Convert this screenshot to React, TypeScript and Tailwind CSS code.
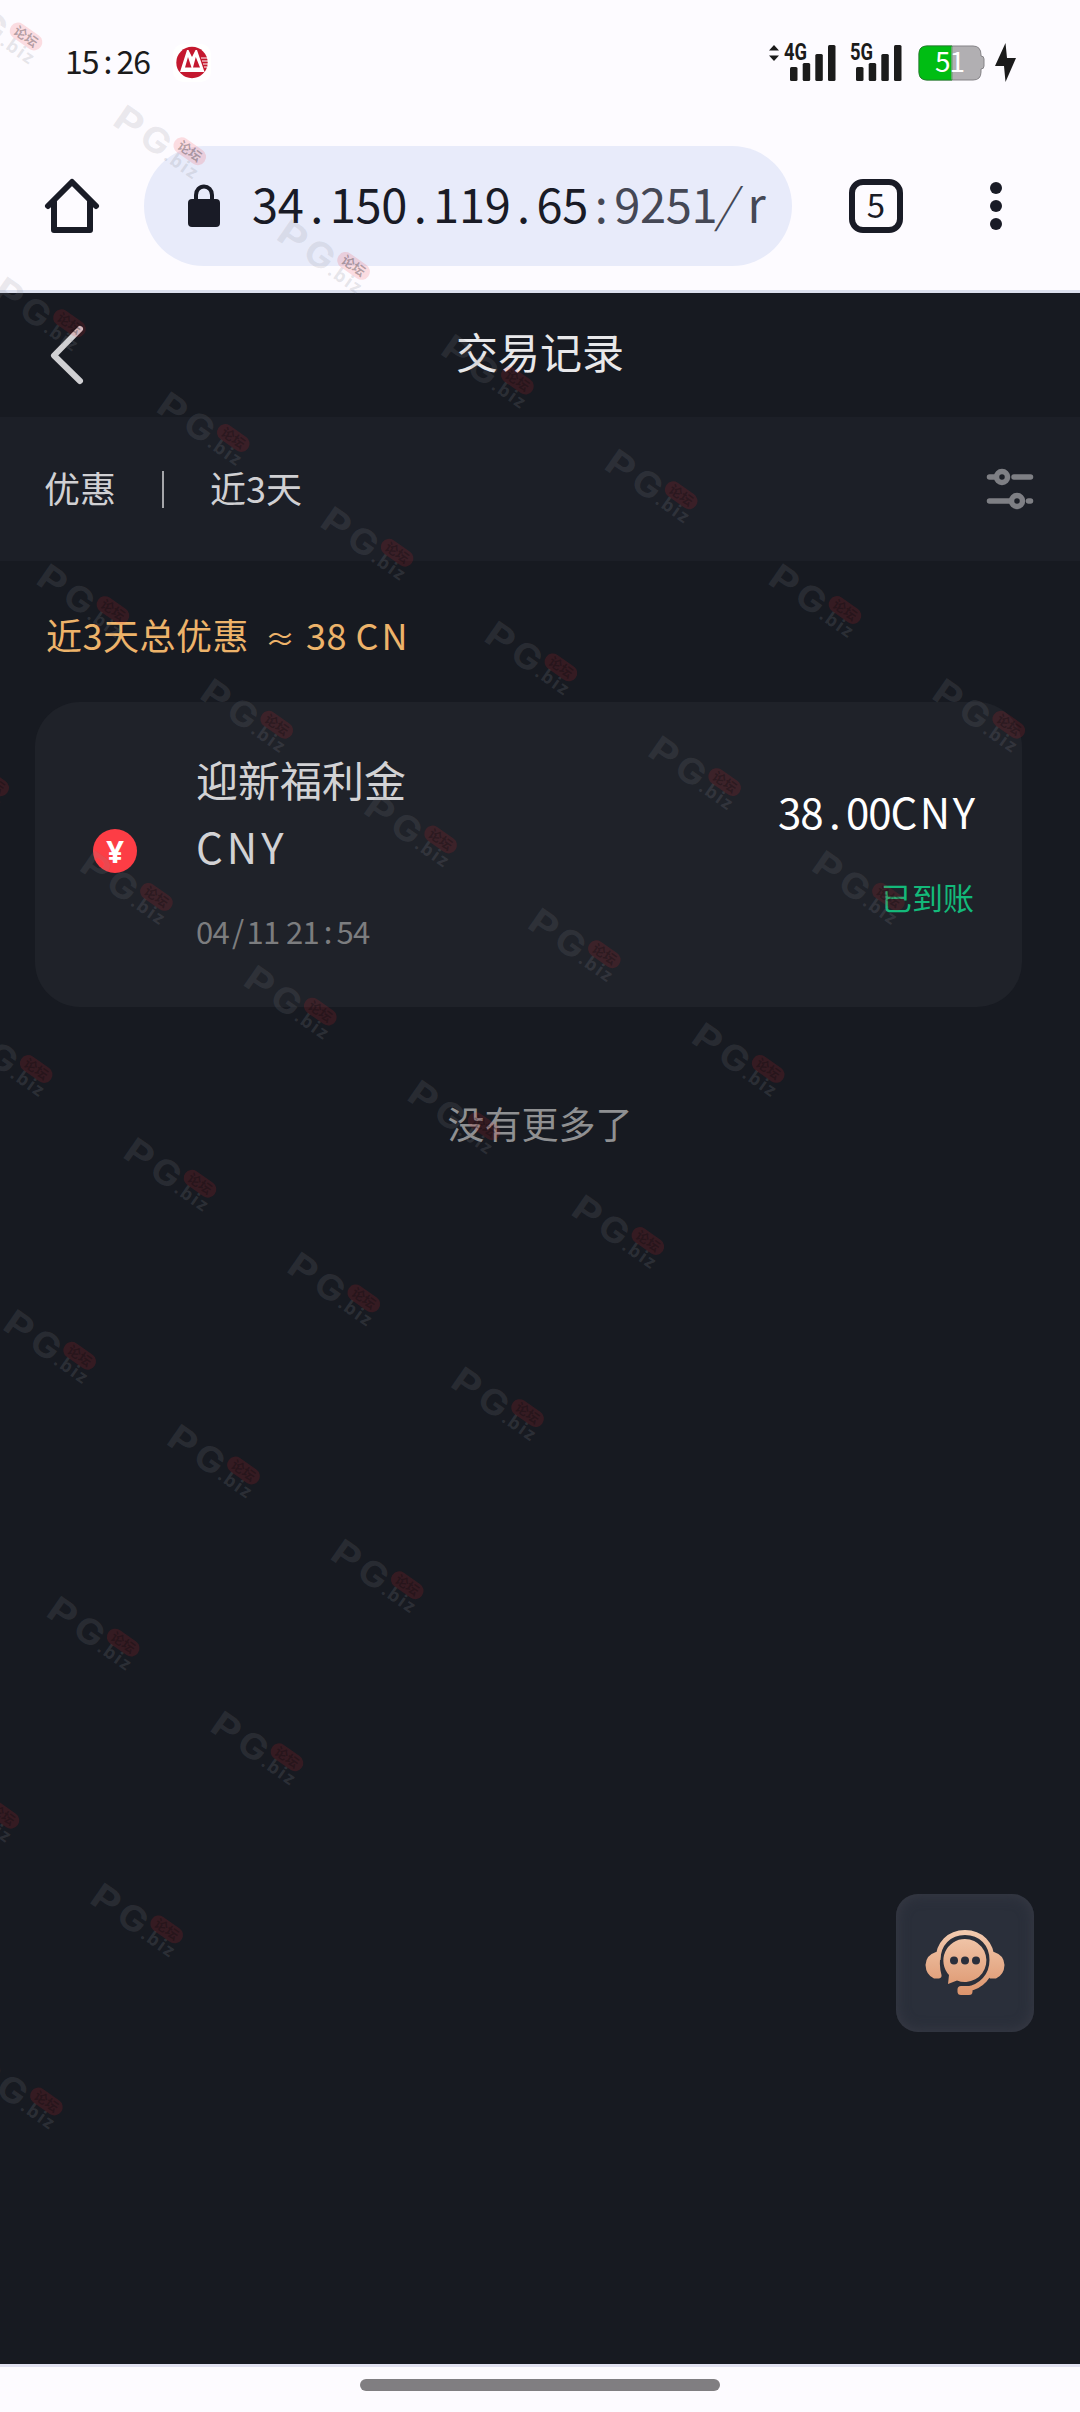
import type { ReactNode } from 'react'

// Each row of the watermark lattice: first and last column index
const watermarkRows: [number, number][] = [
  [-1, 5],
  [-1, 4],
  [-1, 3],
  [-2, 2],
  [-2, 1],
  [-2, 0],
  [-2, -1],
  [-3, -2],
  [-3, -3],
]

const watermarks = watermarkRows.flatMap(([from, to], row) =>
  Array.from({ length: to - from + 1 }, (_, i) => ({
    x: 113 + 43.5 * row + 163.8 * (from + i),
    y: 103 + 286.8 * row + 114.7 * (from + i),
  }))
)

function Watermark() {
  return (
    <svg className="pointer-events-none absolute inset-0" width="1080" height="2412" aria-hidden="true">
      {watermarks.map(({ x, y }) => (
        <g key={`${x}-${y}`} transform={`translate(${x} ${y + 21}) rotate(35)`}>
          <g className="font-['Inter',sans-serif] text-[35px] font-bold" fill="#85878f" fillOpacity="0.17">
            <text x="-2" y="1" textLength="28" lengthAdjust="spacingAndGlyphs">P</text>
            <text x="30" y="1" textLength="29" lengthAdjust="spacingAndGlyphs">G</text>
          </g>
          <g transform="translate(78.5 -22)">
            <rect x="-18" y="-8" width="36" height="16.500" rx="8" fill="#f0202c" fillOpacity="0.14" />
            <text x="-13" y="5" className="font-['Noto_Sans_CJK_SC',sans-serif] text-[13px] font-bold" fill="#05070c" fillOpacity="0.3">
              论坛
            </text>
          </g>
          <text x="61" y="0" textLength="36" className="font-['Noto_Sans',sans-serif] text-[18px] font-bold" fill="#85878f" fillOpacity="0.2">
            .biz
          </text>
        </g>
      ))}
    </svg>
  )
}

// Punctuation that takes the full width of a digit
function Wide({ children }: { children: ReactNode }) {
  return <span className="inline-block w-[0.555em] text-center">{children}</span>
}

function Signal({ label }: { label: string }) {
  return (
    <svg className="overflow-visible" width="54" height="38" viewBox="0 0 54 38" fill="#1b1b1b">
      <text x="0" y="16" textLength="23" lengthAdjust="spacingAndGlyphs" className="font-['Roboto',sans-serif] text-[23px] font-bold">
        {label}
      </text>
      <rect x="6" y="23" width="7.5" height="14" rx="1.5" />
      <rect x="18.7" y="19" width="7.5" height="18" rx="1.5" />
      <rect x="31.3" y="10" width="7.5" height="27" rx="1.5" />
      <rect x="44" y="1" width="7.5" height="36" rx="1.5" />
    </svg>
  )
}

function StatusBar() {
  return (
    <div className="flex h-[125px] items-center justify-between pl-[65px] pr-[64px]">
      <div className="flex items-center">
        <span className="-mt-[6px] w-[108px] text-[32px] leading-none tracking-[-0.9px] text-[#1b1b1b]">
          15<Wide>:</Wide>26
        </span>
        <svg width="38" height="38" viewBox="0 0 38 38">
          <rect width="38" height="38" rx="10" fill="#fff" />
          <circle cx="19" cy="18.500" r="15.7" fill="#c4182f" />
          <path d="M7 28 14 6h1.500L19 13 22.500 6H24l7.500 22Z" fill="#fff" />
          <path d="M12 23.500 15 13l3.500 10.500ZM20 23.500 22.800 13l4.200 10.500Z" fill="#c4182f" />
          <path d="M28 14h7M29 17h6M30 20h5M31 23h3" stroke="#fff" strokeWidth="1.100" />
        </svg>
      </div>
      <div className="flex items-center">
        <svg className="mr-[5px] -mt-[20px]" width="10" height="16" viewBox="0 0 10 16" fill="#1b1b1b">
          <path d="M5 0 10 5.500H0ZM5 16 10 10.500H0Z" />
        </svg>
        <Signal label="4G" />
        <span className="w-3" />
        <Signal label="5G" />
        <div className="relative ml-[14px] flex items-center">
          <svg width="67" height="36" viewBox="0 0 67 36">
            <path d="M9 1h46q8 0 8 9v1q3 0 3 3v7q0 3-3 3v3q0 8-8 8H9q-8 0-8-8V9q0-8 8-8Z" fill="#b1afb2" stroke="#858387" />
            <path d="M34 1H9Q1 1 1 9v18q0 8 8 8h25Z" fill="#00bd13" stroke="#198a24" />
            <path d="M34 1.500v33" stroke="#b1afb2" />
          </svg>
          <span className="absolute left-[17px] top-[1px] text-[28px] leading-[28px] tracking-[-1px] text-white">51</span>
        </div>
        <svg className="ml-[9px]" width="22" height="40" viewBox="0 0 22 40" fill="#1b1b1b">
          <path d="M11.500 0 1 23h9l1.500 16L22 15h-9Z" />
        </svg>
      </div>
    </div>
  )
}

function BrowserBar() {
  return (
    <div className="flex h-[168px] items-start border-b-[3px] border-[#dce0ee] pt-[21px]">
      <div className="flex h-[120px] w-[144px] items-center pl-[44px]">
        <svg width="56" height="56" viewBox="0 0 56 56" fill="none" stroke="#191b26" strokeWidth="6" strokeLinecap="round" strokeLinejoin="round">
          <path d="M4 28 28 4l24 24" />
          <path d="M10 24v28h36V24" />
        </svg>
      </div>
      <div className="flex h-[120px] w-[648px] items-center rounded-full bg-[#e8ebfa] pl-[44px]">
        <svg width="32" height="44" viewBox="0 0 32 44" fill="#191b26">
          <rect y="15" width="32" height="28" rx="4" />
          <path d="M8 16v-5a8 8.500 0 0 1 16 0v5" fill="none" stroke="#191b26" strokeWidth="4" />
        </svg>
        <span className="-mt-[8px] ml-[32px] whitespace-nowrap text-[47px] leading-none tracking-[-0.3px] text-[#191b26]">
          34<Wide>.</Wide>150<Wide>.</Wide>119<Wide>.</Wide>65
          <span className="text-[#454855]">
            <Wide>:</Wide>9251
            <span className="inline-block w-[0.555em] -skew-x-[14deg] text-center font-light">/</span>
            <Wide>r</Wide>
          </span>
        </span>
      </div>
      <div className="ml-[57px] flex h-[120px] items-center">
        <div className="flex h-[54px] w-[54px] items-center justify-center rounded-[14px] border-[6px] border-[#191b26] text-[33px] leading-none text-[#191b26]">
          <span className="-mt-[4px]">5</span>
        </div>
      </div>
      <div className="ml-[87px] flex h-[120px] flex-col items-center justify-center gap-[6px]">
        <i className="h-3 w-3 rounded-full bg-[#191b26]" />
        <i className="h-3 w-3 rounded-full bg-[#191b26]" />
        <i className="h-3 w-3 rounded-full bg-[#191b26]" />
      </div>
    </div>
  )
}

function ServiceIcon() {
  return (
    <svg width="80" height="68" viewBox="0 0 80 68">
      <defs>
        <linearGradient id="peach" x1="0" y1="0" x2="0" y2="66" gradientUnits="userSpaceOnUse">
          <stop offset="0" stopColor="#f3ccb1" />
          <stop offset="1" stopColor="#dc946c" />
        </linearGradient>
      </defs>
      <path d="M13 31C13 15 24 3.500 40 3.500S67 15 67 31 56 58 42 60" fill="none" stroke="url(#peach)" strokeWidth="5" />
      <path d="M14 23h-3Q1 26 .5 36 1 46 9 49.500h5q3-1 2.500-3.500-3-11-.5-22ZM66 23h3q10 3 10.500 13Q79 46 71 49.500h-6l-2-2q6-11 3-24Z" fill="url(#peach)" />
      <path d="M40 10a21.500 21.500 0 1 1-8 41.500L23 55l1-9A21.500 21.500 0 0 1 40 10Z" fill="url(#peach)" />
      <rect x="32.500" y="57" width="15" height="9" rx="3.500" fill="url(#peach)" />
      <circle cx="29" cy="31.500" r="4" fill="#2b2f3b" />
      <circle cx="40" cy="31.500" r="4" fill="#2b2f3b" />
      <circle cx="51" cy="31.500" r="4" fill="#2b2f3b" />
    </svg>
  )
}

export default function App() {
  return (
    <div className="relative flex h-[2412px] w-[1080px] flex-col overflow-hidden bg-[#fdfbff] font-['Noto_Sans_CJK_SC',sans-serif]">
      <StatusBar />
      <BrowserBar />

      <main className="flex h-[2071px] flex-col bg-[#171a21]">
        <header className="grid h-[124px] grid-cols-[1fr_auto_1fr] items-center pl-[50px] pr-[50px]">
          <svg width="36" height="62" viewBox="0 0 36 62" fill="none" stroke="#d0d0d3" strokeWidth="6" strokeLinecap="round" strokeLinejoin="round">
            <path d="M30 5 4 31.500 30 57" />
          </svg>
          <h1 className="-mt-[8px] text-[42px] leading-none text-[#e8e8ea]">交易记录</h1>
        </header>

        <div className="flex h-[144px] items-center justify-between bg-[#1c1f27] pl-[44px] pr-[46px]">
          <div className="flex items-center text-[36px] leading-none text-[#d0d0d3]">
            <span className="-mt-[4px]">优惠</span>
            <span className="ml-[46px] mr-[46px] h-[37px] w-[2px] bg-[#a5a6aa]" />
            <span className="-mt-[4px]">近3天</span>
          </div>
          <svg width="48" height="44" viewBox="0 0 48 44" fill="none" stroke="#7e7f84" strokeWidth="5.500" strokeLinecap="round">
            <path d="M3.500 10H8M28 10h16.500M3.500 34H24M42.500 34h2" />
            <circle cx="16" cy="10" r="5.500" />
            <circle cx="31" cy="34" r="5.500" />
          </svg>
        </div>

        <p className="mt-[55px] pl-[46px] text-[36px] leading-[36px] tracking-[0.5px] text-[#edb36a]">
          近3天总优惠
          <span className="ml-[16px] mr-[13px] inline-block w-[28px] text-center text-[30px]">≈</span>
          38 <span className="tracking-[3px]">CN</span>
        </p>

        <section className="ml-[35px] mt-[47px] flex h-[305px] w-[987px] rounded-[45px] bg-[#1f2229] pl-[58px] pr-[48px]">
          <div className="mt-[127px] flex h-[44px] w-[44px] items-center justify-center rounded-full bg-[#fd3d45] font-['Noto_Sans',sans-serif] text-[31px] font-bold leading-none text-white">
            ¥
          </div>
          <div className="ml-[59px] flex-1 pt-[43px]">
            <div className="w-[230px] text-[42px] leading-[67px] text-[#d2d2d4]">
              迎新福利金
              <br />
              <span className="tracking-[4px]">CNY</span>
            </div>
            <div className="mt-[34px] text-[31px] leading-[36px] tracking-[-0.6px] text-[#7c7d7f]">
              04<Wide>/</Wide>11 21<Wide>:</Wide>54
            </div>
          </div>
          <div className="flex flex-col items-end pt-[88px]">
            <div className="text-[42px] leading-[42px] tracking-[-1px] text-white">
              38<Wide>.</Wide>00<span className="tracking-[2.5px]">CN</span>Y
            </div>
            <div className="mt-[49px] text-[31px] leading-[31px] text-[#13b97a]">已到账</div>
          </div>
        </section>

        <p className="mt-[98px] text-center text-[37px] leading-[37px] text-[#8f9092]">没有更多了</p>
      </main>

      <footer className="flex h-[48px] justify-center border-t-[3px] border-[#e1e1f0] pt-[12px]">
        <div className="h-3 w-[360px] rounded-full bg-[#807e81]" />
      </footer>

      <button className="absolute left-[896px] top-[1894px] flex h-[138px] w-[138px] items-center justify-center rounded-[22px] bg-[#2a2f3a] shadow-[inset_0_0_14px_#393b46]">
        <ServiceIcon />
      </button>

      <Watermark />
    </div>
  )
}
